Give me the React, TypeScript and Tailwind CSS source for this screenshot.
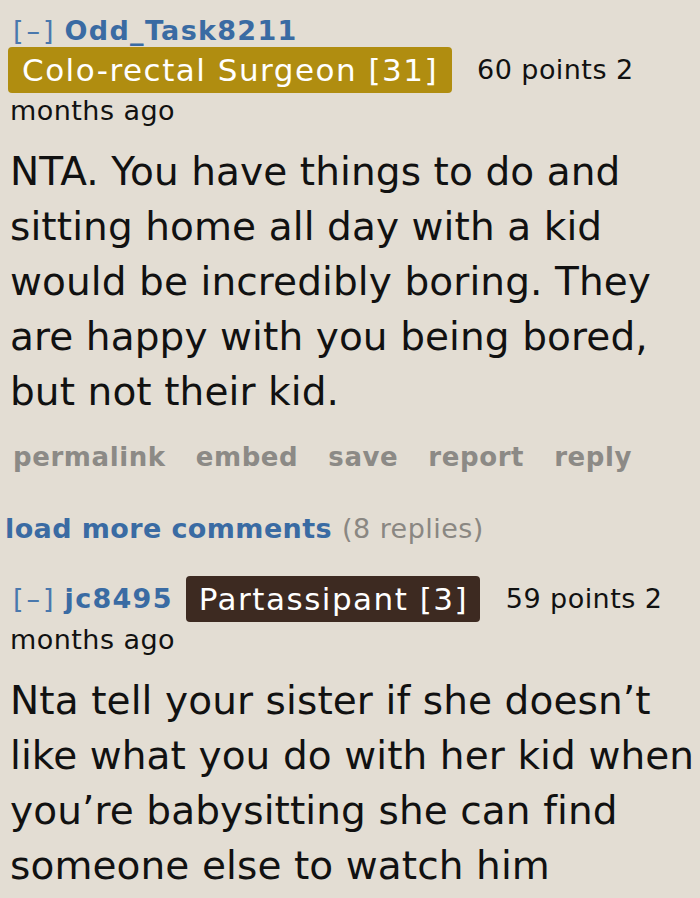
export default function App() {
  const sans = "font-['DejaVu_Sans','Verdana',sans-serif]";
  const user = "font-bold text-[27px] tracking-[1.3px] text-[#3a6ba3]";
  const small = "text-[27px] tracking-[0.45px]";

  return (
    <div className={`min-h-[898px] w-[700px] overflow-hidden bg-[#e3ddd3] ${sans} text-[#111]`}>
      {/* First comment */}
      <div className="pt-[14px]">
        <div className="flex h-[32px] items-center pl-[13px] leading-none">
          <span className="text-[27px] tracking-[3px] text-[#4a78ad]">[–]</span>
          <span className={`ml-[8px] ${user}`}>Odd_Task8211</span>
        </div>
        <div className="mt-px flex h-[46px] items-center pl-[8px]">
          <span className="flex h-[46px] w-[444px] items-center rounded-[4px] bg-[#b08d10] pl-[14px] text-[31px] tracking-[1.5px] text-white">
            Colo-rectal Surgeon [31]
          </span>
          <span className={`ml-[25px] ${small}`}>60 points 2</span>
        </div>
        <div className={`flex h-[36px] items-center pl-[10px] ${small}`}>months ago</div>

        <div className="mt-[15px] pl-[10px] text-[39px] tracking-[0.1px] leading-[55px]">
          <div className="whitespace-nowrap">NTA. You have things to do and</div>
          <div className="whitespace-nowrap">sitting home all day with a kid</div>
          <div className="whitespace-nowrap">would be incredibly boring. They</div>
          <div className="whitespace-nowrap">are happy with you being bored,</div>
          <div className="whitespace-nowrap">but not their kid.</div>
        </div>

        <div className="mt-[20px] flex h-[36px] items-center gap-[30px] pl-[13px] text-[26px] font-bold tracking-[0.6px] text-[#8c8a86]">
          <span>permalink</span>
          <span>embed</span>
          <span>save</span>
          <span>report</span>
          <span>reply</span>
        </div>
      </div>

      {/* Load more */}
      <div className="mt-[36px] flex h-[36px] items-center pl-[5px]">
        <span className="text-[27px] font-bold tracking-[0.4px] text-[#3a6ba3]">load more comments</span>
        <span className={`ml-[10px] text-[#8a8782] ${small}`}>(8 replies)</span>
      </div>

      {/* Second comment */}
      <div className="mt-[29px]">
        <div className="flex h-[46px] items-center pl-[13px]">
          <span className="text-[27px] tracking-[3px] text-[#4a78ad]">[–]</span>
          <span className={`ml-[8px] ${user}`}>jc8495</span>
          <span className="ml-[13px] flex h-[46px] w-[294px] items-center rounded-[4px] bg-[#3d2a21] pl-[13px] text-[31px] tracking-[1.5px] text-white">
            Partassipant [3]
          </span>
          <span className={`ml-[26px] ${small}`}>59 points 2</span>
        </div>
        <div className={`flex h-[36px] items-center pl-[10px] ${small}`}>months ago</div>

        <div className="mt-[15px] pl-[10px] text-[39px] tracking-[0.1px] leading-[55px]">
          <div className="whitespace-nowrap">Nta tell your sister if she doesn’t</div>
          <div className="whitespace-nowrap">like what you do with her kid when</div>
          <div className="whitespace-nowrap">you’re babysitting she can find</div>
          <div className="whitespace-nowrap">someone else to watch him</div>
        </div>
      </div>
    </div>
  );
}
